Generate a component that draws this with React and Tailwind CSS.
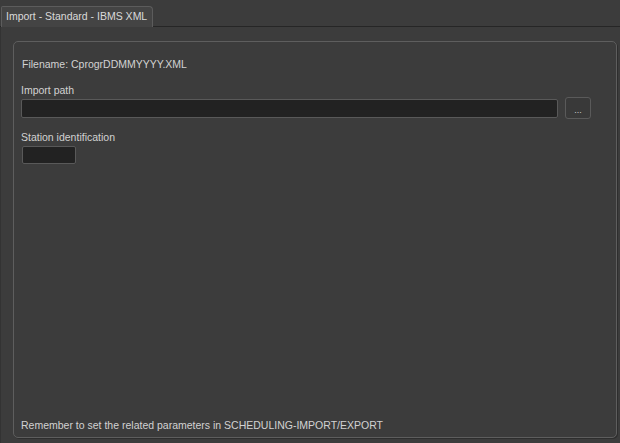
import React from 'react';

const font = { fontFamily: '"Liberation Sans", Arial, sans-serif' };

export default function App() {
  return (
    <div
      className="w-[620px] h-[443px] bg-[#3c3c3c] text-[#d2d2d2] text-[10.5px] flex flex-col overflow-hidden"
      style={font}
    >
      {/* tab strip */}
      <div className="h-[27px] flex items-end border-b border-[#262626]">
        <div className="ml-[1px] h-[21px] w-[152px] -mb-px bg-[#444444] border border-b-0 border-[#5c5c5c] rounded-tr-[4px] rounded-tl-[2px] flex items-center pl-[4px] whitespace-nowrap text-[10.5px] text-[#dadada]">
          Import - Standard - IBMS XML
        </div>
      </div>

      {/* body */}
      <div className="flex-1 flex pl-[12px] pr-[3px] pt-[14px] pb-[5px] border-l border-[#333333]">
        <div className="flex-1 flex flex-col border border-[#5e5e5e] rounded-[5px] pl-[7px] pr-[25px] pt-[15px] pb-[5px] shadow-[1px_1px_0_#2e2e2e]">
          <div className="pl-[1px] leading-[14px]">Filename: CprogrDDMMYYYY.XML</div>

          <div className="mt-[12px] leading-[14px]">Import path</div>
          <div className="flex items-center gap-[7px]">
            <div className="flex-1 h-[19px] bg-[#222222] border border-[#595959] rounded-[2px]" />
            <button className="w-[26px] h-[22px] bg-[#393939] border border-[#5a5a5a] rounded-[3px] flex items-end justify-center pb-[3px] text-[9px] leading-none text-[#cfcfcf]">
              ...
            </button>
          </div>

          <div className="mt-[11px] leading-[14px]">Station identification</div>
          <div className="mt-[2px] ml-[1px] w-[54px] h-[18px] bg-[#222222] border border-[#595959] rounded-[2px]" />

          <div className="flex-1" />
          <div className="leading-[14px]">
            Remember to set the related parameters in SCHEDULING-IMPORT/EXPORT
          </div>
        </div>
      </div>
    </div>
  );
}
